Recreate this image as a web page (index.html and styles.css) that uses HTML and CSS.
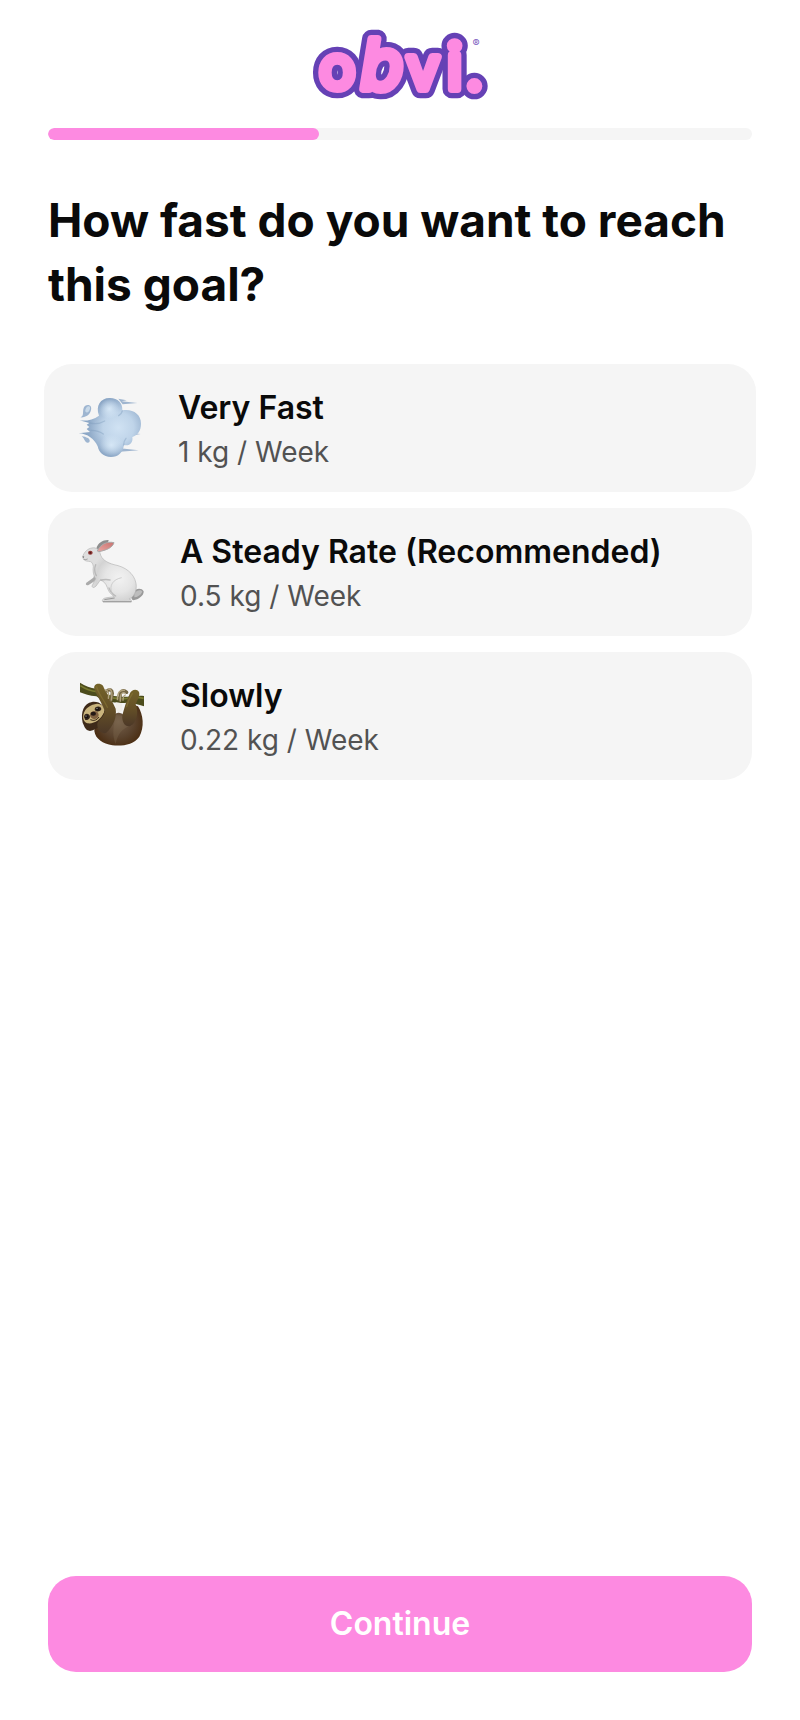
FILE: index.html
```html
<!DOCTYPE html>
<html lang="en">
<head>
  <meta charset="UTF-8" />
  <meta name="viewport" content="width=device-width, initial-scale=1.0" />
  <title>Obvi</title>
  <link rel="stylesheet" href="styles.css">
</head>
<body>

  <div class="page">
    <header class="header">
      <svg class="logo" viewBox="36 18 528 228" role="img" aria-label="obvi.">
        <defs>
          <g id="wordmark">
            <text x="112" y="206" font-size="180">o</text>
            <text x="246" y="206" font-size="205" font-style="italic">b</text>
            <text x="369" y="206" font-size="174">v</text>
            <text x="464" y="206" font-size="188">i</text>
            <text x="523" y="209" font-size="180">.</text>
          </g>
        </defs>
        <use href="#wordmark" class="logo-outline" />
        <use href="#wordmark" class="logo-fill" />
        <text class="logo-mark" x="528" y="80">®</text>
      </svg>
    </header>

    <div class="progress" role="progressbar" aria-label="Quiz progress" aria-valuenow="38" aria-valuemin="0" aria-valuemax="100">
      <div class="progress-fill" style="width: 38.5%"></div>
    </div>

    <main class="content">
      <h1>How fast do you want to reach this goal?</h1>

      <div class="options">
        <button type="button" class="option active">
          <svg class="option-icon" viewBox="24 33 192 192" aria-hidden="true">
            <defs>
              <radialGradient id="puff" gradientUnits="userSpaceOnUse" cx="145" cy="128" r="92">
                <stop offset="0" stop-color="#d0e2f3" />
                <stop offset="0.5" stop-color="#bfd4e9" />
                <stop offset="1" stop-color="#8ca7c6" />
              </radialGradient>
              <radialGradient id="puffLight" cx="0.5" cy="0.5" r="0.5">
                <stop offset="0" stop-color="#d6e7f6" />
                <stop offset="1" stop-color="#d6e7f6" stop-opacity="0" />
              </radialGradient>
            </defs>
            <path fill="#9fb5cf" d="M145 41 L170 46 L155 49 L202 54 L158 58Z M180 144 L212 147 L182 152Z M150 190 L206 196 L150 200Z" />
            <path fill="url(#puff)" d="M28 106 C48 109 70 104 87 92 C76 62 92 38 120 39 C144 39 158 54 157 76 C188 71 213 87 213 116 C213 138 202 151 187 156 C190 174 178 184 162 180 C159 202 145 216 123 216 C99 216 87 202 83 184 C73 162 53 146 26 145 L60 141 L50 132 L58 126 L50 119 L58 114Z" />
            <ellipse cx="118" cy="72" rx="30" ry="30" fill="url(#puffLight)" />
            <ellipse cx="124" cy="180" rx="36" ry="32" fill="url(#puffLight)" />
            <path fill="none" stroke="#7e9abb" stroke-width="4" stroke-linecap="round" opacity="0.4" d="M60 114 Q84 120 104 108 M63 136 Q86 137 100 147 M157 78 Q154 88 146 92 M161 180 Q161 168 168 160" />
            <path fill="#9eb5d0" d="M31 97 C43 93 37 82 41 69 C44 59 59 57 63 66 C66 77 57 91 48 94 C43 97 37 98 31 97Z M35 154 C44 154 47 157 54 159 C62 164 60 174 53 173 C44 173 45 162 35 154Z" />
            <ellipse cx="53" cy="73" rx="6" ry="10" fill="#c8d9e9" transform="rotate(25 53 73)" />
          </svg>
          <span class="option-text">
            <span class="option-title">Very Fast</span>
            <span class="option-rate">1 kg / Week</span>
          </span>
        </button>

        <button type="button" class="option">
          <svg class="option-icon" viewBox="30 30 192 192" aria-hidden="true">
            <defs>
              <radialGradient id="fur" gradientUnits="userSpaceOnUse" cx="147" cy="145" r="85">
                <stop offset="0" stop-color="#f2f2f2" />
                <stop offset="0.5" stop-color="#e5e5e5" />
                <stop offset="0.8" stop-color="#d3d3d3" />
                <stop offset="1" stop-color="#dedede" />
              </radialGradient>
              <linearGradient id="ear" x1="0" y1="1" x2="1" y2="0">
                <stop offset="0" stop-color="#eaa7a3" />
                <stop offset="1" stop-color="#c8726f" />
              </linearGradient>
            </defs>
            <path fill="#8e8e8e" d="M79 55 C84 38 99 29 116 30 L113 41 L88 61Z" />
            <path fill="#999" d="M192 185 C198 174 216 174 221 184 C222 197 206 209 190 211 C181 207 184 194 192 185Z" />
            <path fill="#bdbdbd" d="M193 190 C201 180 212 178 217 185 C212 196 202 201 193 202Z" />
            <path fill="#aaa" d="M75 129 L70 143 L49 158 C45 164 50 168 57 164 L82 148 L89 132Z" />
            <path fill="url(#fur)" stroke="#b5b5b5" stroke-width="2" d="M38 80 C42 66 54 55 66 54 C78 51 88 59 91 72 C94 87 110 98 132 104 C165 110 192 129 198 160 C202 184 190 203 177 207 C183 208 186 212 184 216 L99 216 C94 211 99 204 111 203 L133 200 C120 191 116 184 112 173 C108 160 101 154 91 150 L82 163 C75 174 67 175 66 168 L77 146 C70 137 68 123 70 109 C68 99 65 94 56 94 C45 94 39 89 38 80Z" />
            <path fill="none" stroke="#a9a9a9" stroke-width="4" stroke-linecap="round" opacity="0.7" d="M117 174 C121 185 127 192 137 198 M77 104 Q70 121 79 137 M92 150 Q109 147 120 150" />
            <path fill="none" stroke="#c6c6c6" stroke-width="3" opacity="0.8" d="M126 190 C116 165 130 148 155 143" />
            <path fill="none" stroke="#999" stroke-width="3" d="M99 215 H184 M103 209 L134 204" />
            <path fill="url(#ear)" stroke="#aaa" stroke-width="3" d="M82 63 C91 43 111 33 132 38 C128 53 108 61 86 65Z" />
            <ellipse cx="61" cy="68" rx="7" ry="6" fill="#923b39" />
            <circle cx="61" cy="68" r="3" fill="#571817" />
            <path d="M38 79 l5 1 -4 4z" fill="#555" />
            <path d="M41 88 q7 2 12 -1" fill="none" stroke="#888" stroke-width="2" />
          </svg>
          <span class="option-text">
            <span class="option-title">A Steady Rate (Recommended)</span>
            <span class="option-rate">0.5 kg / Week</span>
          </span>
        </button>

        <button type="button" class="option">
          <svg class="option-icon" viewBox="30 27 192 192" aria-hidden="true">
            <defs>
              <radialGradient id="body" gradientUnits="userSpaceOnUse" cx="145" cy="140" r="78">
                <stop offset="0" stop-color="#75604a" />
                <stop offset="0.6" stop-color="#5a432e" />
                <stop offset="1" stop-color="#4b2e13" />
              </radialGradient>
              <linearGradient id="arm" x1="0" y1="0" x2="0" y2="1">
                <stop offset="0" stop-color="#736329" />
                <stop offset="0.5" stop-color="#655027" />
                <stop offset="1" stop-color="#4c3827" />
              </linearGradient>
            </defs>
            <path fill="#4c4c1c" d="M30 23 C46 34 61 38 79 41 C97 57 116 61 140 64 C169 69 197 60 222 63 V94 C204 88 191 84 171 83 C137 86 98 79 79 64 C58 63 44 57 30 52Z" />
            <path fill="none" stroke="#7a7b30" stroke-width="5" d="M31 32 Q55 48 81 50 M109 64 Q138 73 171 70 Q199 64 221 70" />
            <path fill="#f1eee8" d="M137 82 L155 85 L158 103 L147 115 L137 104Z" />
            <path fill="url(#body)" d="M77 130 C90 121 112 119 135 117 C144 111 151 112 160 119 C168 102 181 88 204 94 C220 119 224 157 208 185 C191 209 159 214 127 211 C99 206 76 192 73 168Z" />
            <path fill="#856f55" opacity="0.3" d="M137 120 L161 122 C158 139 173 145 186 151 C159 158 143 176 137 207 C125 180 131 148 137 120Z" />
            <path fill="#3e2a19" d="M38 143 C31 111 42 84 66 81 C89 78 106 93 106 118 C103 144 83 165 60 168 C45 165 44 155 38 143Z" />
            <path fill="#c9b47d" d="M40 119 C45 97 63 89 81 86 C97 86 105 98 102 112 C92 135 72 148 52 145 C41 141 38 130 40 119Z" />
            <path fill="#33241a" d="M42 126 C42 116 52 113 58 120 C63 127 58 136 46 135Z M75 98 C84 92 94 94 94 103 C90 112 77 111 74 104Z" />
            <ellipse cx="73" cy="120" rx="13" ry="12" fill="#806140" />
            <ellipse cx="70" cy="116" rx="8" ry="6" fill="#241915" />
            <circle cx="50" cy="125" r="5" fill="#17110d" />
            <circle cx="83" cy="102" r="5" fill="#17110d" />
            <circle cx="48" cy="123" r="1.5" fill="#fff" />
            <circle cx="81" cy="100" r="1.5" fill="#fff" />
            <path fill="none" stroke="#3d2a18" stroke-width="3" d="M61 134 Q77 141 87 126" />
            <path fill="url(#arm)" d="M73 41 C70 26 88 21 99 32 C106 52 128 76 137 101 C141 127 130 153 108 174 C91 177 81 164 82 145 C89 131 103 126 104 107 C96 84 79 60 73 41Z" />
            <path fill="url(#arm)" d="M178 59 C183 44 200 39 207 51 C211 61 202 75 197 88 C206 109 202 144 181 153 C164 158 155 139 157 121 C163 98 169 77 178 59Z" />
            <path fill="none" stroke="#897635" stroke-width="4" stroke-linecap="round" opacity="0.6" d="M80 36 C86 59 104 77 112 97 M187 56 Q174 75 170 95" />
            <path fill="none" stroke="#756744" stroke-width="10" stroke-linecap="round" d="M111 48 Q126 39 127 55 L123 75 M150 75 L151 53 Q159 42 170 52" />
            <path fill="none" stroke="#b0a17c" stroke-width="4" stroke-linecap="round" d="M106 45 Q119 46 115 70 M114 42 Q130 40 124 75 M142 74 Q142 43 163 46 M151 78 Q149 50 164 54 M159 76 Q159 63 166 60" />
          </svg>
          <span class="option-text">
            <span class="option-title">Slowly</span>
            <span class="option-rate">0.22 kg / Week</span>
          </span>
        </button>
      </div>
    </main>

    <button type="button" class="continue">Continue</button>
  </div>

  <script>
    // Only one option can be active
    const options = document.querySelectorAll('.option');
    options.forEach(option => {
      option.addEventListener('click', () => {
        options.forEach(o => o.classList.remove('active'));
        option.classList.add('active');
      });
    });
  </script>
</body>
</html>
```

FILE: styles.css
```css
* {
  box-sizing: border-box;
}

body {
  margin: 0;
  background-color: #fff;
  color: #0a0a0a;
  font-family: 'Inter', sans-serif;
}

button {
  font-family: inherit;
  border: none;
  cursor: pointer;
}

.page {
  display: flex;
  flex-direction: column;
  min-height: 100vh;
  padding: 0 48px 48px;
}

.header {
  display: flex;
  justify-content: center;
  padding: 26px 0;
}

.logo {
  width: 176px;
  height: 76px;
  overflow: visible;
  font-weight: 400;
  text-anchor: middle;
  stroke-linejoin: round;
}

.logo-outline {
  fill: #6541b5;
  stroke: #6541b5;
  stroke-width: 56px;
}

.logo-fill {
  fill: #fd8ae1;
  stroke: #fd8ae1;
  stroke-width: 24px;
}

.logo-mark {
  fill: #7b5cc0;
  font-size: 32px;
}

/* Progress */
.progress {
  height: 12px;
  border-radius: 6px;
  background-color: #f5f5f5;
  overflow: hidden;
}

.progress-fill {
  height: 100%;
  border-radius: 6px;
  background-color: #fd8ae1;
}

.content {
  flex: 1;
  padding: 48px 0;
}

h1 {
  margin: 0 0 48px;
  font-size: 46px;
  font-weight: 700;
  line-height: 64px;
}

/* Options */
.options {
  display: flex;
  flex-direction: column;
  gap: 16px;
}

.option {
  display: flex;
  align-items: center;
  gap: 36px;
  padding: 20px 32px;
  border-radius: 28px;
  background-color: #f5f5f5;
  color: #0a0a0a;
  text-align: left;
}

.option.active {
  margin: 0 -4px;
  padding: 20px 34px;
}

.option-icon {
  flex-shrink: 0;
  width: 64px;
  height: 64px;
  overflow: visible;
}

.option-text {
  display: flex;
  flex-direction: column;
}

.option-title {
  font-size: 32px;
  font-weight: 600;
  line-height: 48px;
}

.option-rate {
  font-size: 28px;
  line-height: 40px;
  color: #525252;
}

.continue {
  padding: 24px;
  border-radius: 28px;
  background-color: #fd8ae1;
  color: #fff;
  font-size: 32px;
  font-weight: 600;
  line-height: 48px;
}
```
